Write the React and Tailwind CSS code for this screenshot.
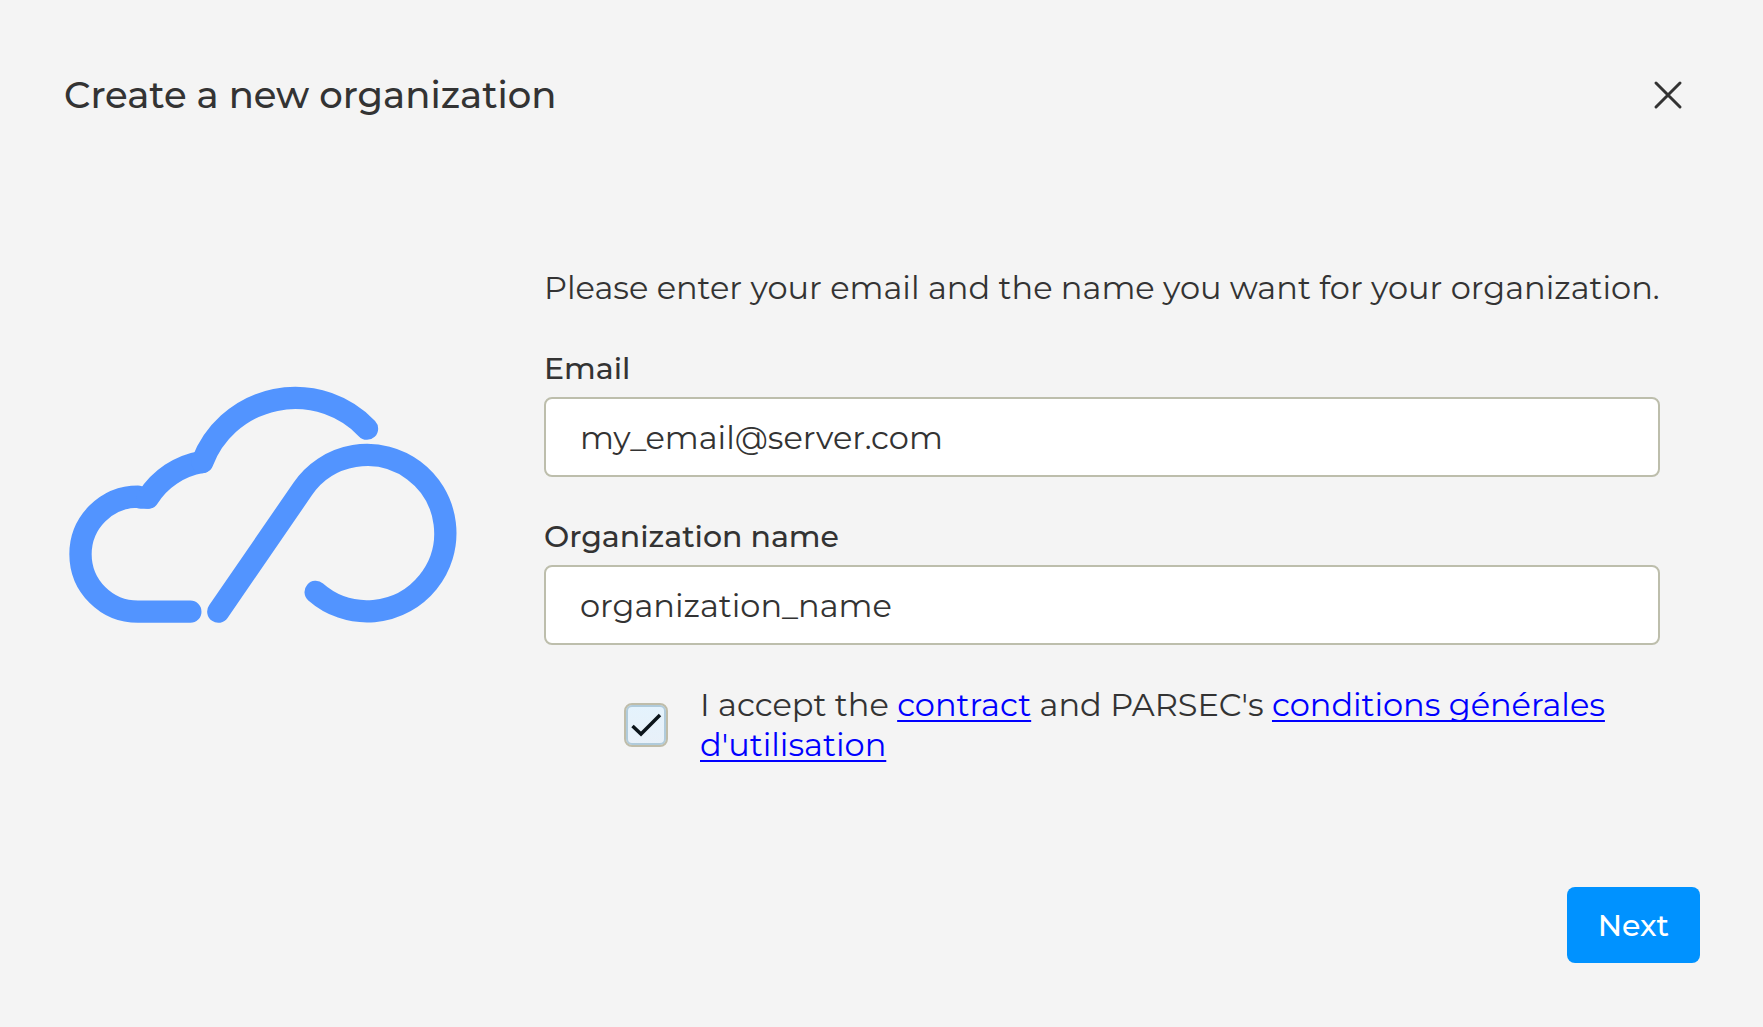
import { useState } from "react";

function CloudLogo() {
  return (
    <svg
      viewBox="88 80 1164 712"
      className="mb-6 w-[388px] shrink-0"
      fill="none"
      stroke="#5294ff"
      strokeWidth="67"
      strokeLinecap="round"
      strokeLinejoin="round"
      role="img"
      aria-label="Parsec"
    >
      <path d="M452 757H295A172.500 172.500 0 0 1 295 412L303 415H322" />
      <path d="M325 415A238 238 0 0 1 486 308" />
      <path d="M488 308A298 298 0 0 1 982 208" />
      <path d="M536 757L789 389A234.500 234.500 0 1 1 828 698" />
    </svg>
  );
}

function Field({ id, label, type, value, onChange }) {
  return (
    <div className="flex flex-col gap-2">
      <label htmlFor={id} className="text-[30px] leading-10 font-medium">
        {label}
      </label>
      <input
        id={id}
        type={type}
        value={value}
        onChange={(e) => onChange(e.target.value)}
        className="h-20 w-full rounded-lg border-2 border-[#bdbeac] bg-white px-[34px] text-[32px] font-normal outline-none"
      />
    </div>
  );
}

const linkClass =
  "text-[#0000ff] underline decoration-2 underline-offset-4 [text-decoration-skip-ink:none]";

export default function App() {
  const [email, setEmail] = useState("my_email@server.com");
  const [organization, setOrganization] = useState("organization_name");
  const [accepted, setAccepted] = useState(true);

  return (
    <main className="flex min-h-screen flex-col bg-[#f4f4f4] py-16 pr-[63px] pl-16 font-['Montserrat',Inter,sans-serif] text-[#333333]">
      <header className="flex items-center justify-between pr-3">
        <h1 className="text-[37px] leading-[62px] font-medium">
          Create a new organization
        </h1>
        <button type="button" aria-label="Close" className="p-1">
          <svg
            viewBox="0 0 32 32"
            className="size-8"
            fill="none"
            stroke="#333333"
            strokeWidth="3"
            strokeLinecap="round"
          >
            <path d="M4 4L28 28M28 4L4 28" />
          </svg>
        </button>
      </header>

      <form
        className="flex grow flex-col justify-between"
        onSubmit={(e) => e.preventDefault()}
      >
        <div className="flex items-center gap-[87px] pt-[142px] pr-10 pl-[5px]">
          <CloudLogo />
          <div className="flex grow flex-col gap-10">
            <p className="pb-px text-[32px] leading-10 font-normal whitespace-nowrap">
              Please enter your email and the name you want for your
              organization.
            </p>
            <Field
              id="email"
              label="Email"
              type="email"
              value={email}
              onChange={setEmail}
            />
            <Field
              id="organization"
              label="Organization name"
              type="text"
              value={organization}
              onChange={setOrganization}
            />
            <div className="flex items-center gap-8 pl-20">
              <span className="grid size-11 shrink-0 place-items-center">
                <input
                  id="accept"
                  type="checkbox"
                  checked={accepted}
                  onChange={(e) => setAccepted(e.target.checked)}
                  className="peer col-start-1 row-start-1 size-11 appearance-none rounded-lg border-2 border-[#bfbdaa] bg-linear-to-b from-[#e4f3fd] to-[#e8f0f8] inset-ring-2 inset-ring-[#b0cbdb]"
                />
                <svg
                  viewBox="0 0 44 44"
                  className="pointer-events-none invisible col-start-1 row-start-1 size-11 peer-checked:visible"
                  fill="none"
                  stroke="#0b141a"
                  strokeWidth="3.500"
                >
                  <path d="M8.500 23L17 31L36 12" />
                </svg>
              </span>
              <label
                htmlFor="accept"
                className="text-[32px] leading-10 font-normal"
              >
                I accept the{" "}
                <a href="#contract" className={linkClass}>
                  contract
                </a>{" "}
                and PARSEC's{" "}
                <a href="#conditions" className={linkClass}>
                  conditions générales d'utilisation
                </a>
              </label>
            </div>
          </div>
        </div>

        <div className="flex justify-end">
          <button
            type="submit"
            className="h-[76px] rounded-lg bg-[#0092ff] px-[31px] text-[30px] font-medium text-white"
          >
            Next
          </button>
        </div>
      </form>
    </main>
  );
}
